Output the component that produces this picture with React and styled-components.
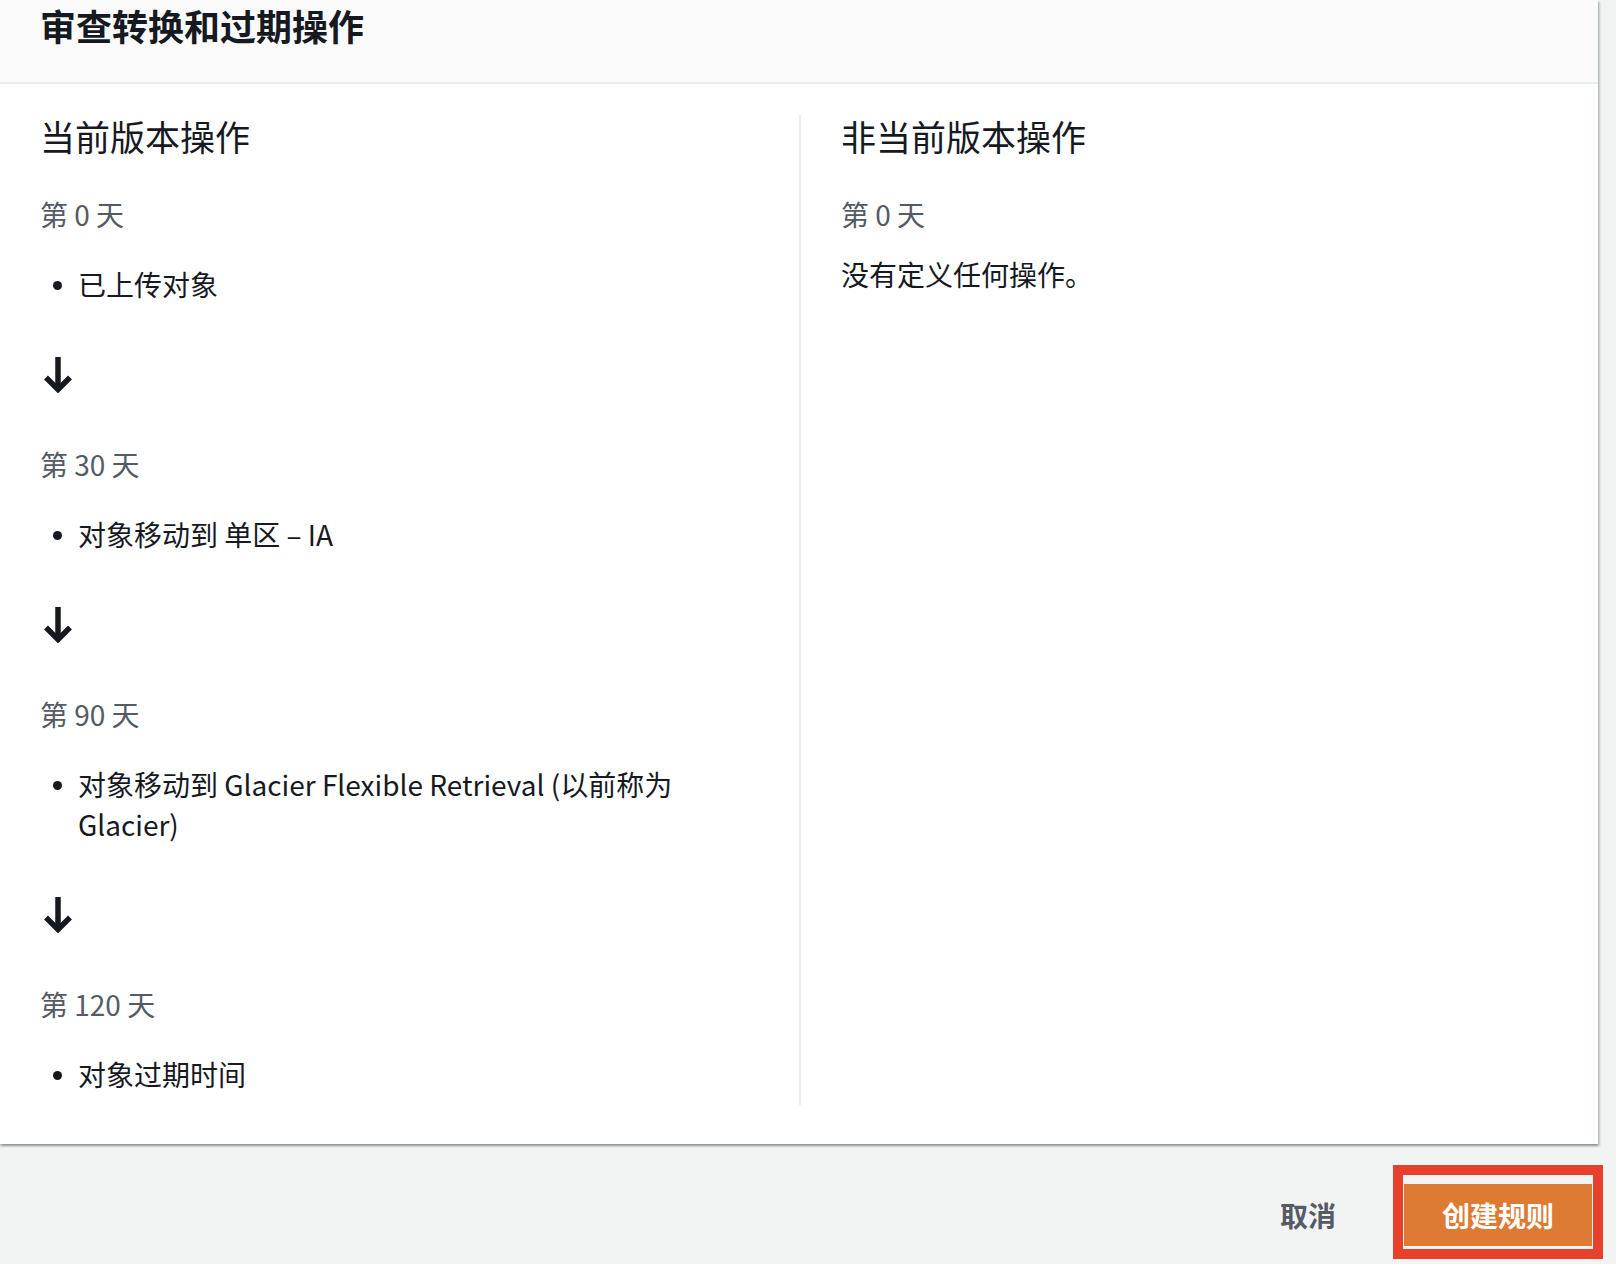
import React from 'react'
import styled, { createGlobalStyle } from 'styled-components'

const GlobalStyle = createGlobalStyle`
  html, body {
    margin: 0;
    padding: 0;
    background: #f2f3f3;
    font-family: "Noto Sans CJK SC", "Noto Sans", sans-serif;
    color: #16191f;
  }
`

const steps = [
  { day: '第 0 天', action: '已上传对象' },
  { day: '第 30 天', action: '对象移动到 单区 – IA' },
  { day: '第 90 天', action: '对象移动到 Glacier Flexible Retrieval (以前称为 Glacier)' },
  { day: '第 120 天', action: '对象过期时间' },
]

const DownArrow = () => (
  <svg width="30" height="38" viewBox="0 0 30 38" fill="none">
    <path d="M15 2v32" stroke="#16191f" strokeWidth="5.5" />
    <path d="M3 22.5l12 12 12-12" stroke="#16191f" strokeWidth="5.5" strokeLinejoin="miter" />
  </svg>
)

const App = () => {
  return (
    <Page>
      <GlobalStyle />
      <Card>
        <CardHeader>
          <Title>审查转换和过期操作</Title>
        </CardHeader>
        <CardBody>
          <Column>
            <SectionTitle>当前版本操作</SectionTitle>
            {steps.map((s, i) => (
              <Step key={s.day}>
                <DayLabel>{s.day}</DayLabel>
                <ActionList>
                  <ActionItem>
                    <Dot />
                    <span>{s.action}</span>
                  </ActionItem>
                </ActionList>
                {i < steps.length - 1 && (
                  <ArrowRow>
                    <DownArrow />
                  </ArrowRow>
                )}
              </Step>
            ))}
          </Column>
          <Column divided>
            <SectionTitle>非当前版本操作</SectionTitle>
            <DayLabel>第 0 天</DayLabel>
            <EmptyText>没有定义任何操作。</EmptyText>
          </Column>
        </CardBody>
      </Card>
      <Footer>
        <CancelButton>取消</CancelButton>
        <Highlight>
          <PrimaryButton>创建规则</PrimaryButton>
        </Highlight>
      </Footer>
    </Page>
  )
}

const Page = styled.div`
  min-height: 1264px;
  background: #f2f3f3;
  overflow: hidden;
`

const Card = styled.div`
  width: 1598px;
  background: #ffffff;
  box-shadow: 0 2px 2px 0 rgba(0, 28, 36, 0.3), 2px 2px 2px 0 rgba(0, 28, 36, 0.18);
`

const CardHeader = styled.div`
  background: #fafafa;
  padding: 4px 40px 36px;
  border-bottom: 2px solid #eaeded;
`

const Title = styled.h2`
  margin: 0;
  font-size: 36px;
  line-height: 42px;
  font-weight: 700;
  color: #16191f;
`

const CardBody = styled.div`
  display: grid;
  grid-template-columns: 1fr 1fr;
  padding: 31px 40px 39px;
`

const Column = styled.div`
  padding: ${p => (p.divided ? '0 0 0 40px' : '0 40px 11px 0')};
  border-left: ${p => (p.divided ? '2px solid #eaeded' : 'none')};
`

const SectionTitle = styled.h3`
  margin: 0 0 37px;
  font-size: 35px;
  line-height: 42px;
  font-weight: 400;
  color: #16191f;
`

const Step = styled.div`
  & + & {
    margin-top: 50px;
  }
`

const DayLabel = styled.div`
  font-size: 28px;
  line-height: 40px;
  color: #545b64;
`

const ActionList = styled.ul`
  list-style: none;
  margin: 30px 0 0;
  padding: 0;
`

const ActionItem = styled.li`
  display: flex;
  align-items: flex-start;
  font-size: 28px;
  line-height: 40px;
  color: #16191f;
`

const Dot = styled.span`
  flex: none;
  width: 9px;
  height: 9px;
  border-radius: 50%;
  background: #16191f;
  margin: 17px 16px 0 13px;
`

const ArrowRow = styled.div`
  display: flex;
  align-items: center;
  height: 40px;
  margin-top: 50px;
  padding-left: 3px;
`

const EmptyText = styled.p`
  margin: 20px 0 0;
  font-size: 28px;
  line-height: 40px;
  color: #16191f;
`

const Footer = styled.div`
  display: flex;
  justify-content: flex-end;
  align-items: center;
  padding: 40px 24px 0 0;
`

const CancelButton = styled.button`
  border: none;
  background: transparent;
  font-family: inherit;
  font-size: 28px;
  font-weight: 700;
  color: #545b64;
  height: 62px;
  padding: 0 36px;
  margin-right: 32px;
  cursor: pointer;
`

const Highlight = styled.span`
  position: relative;
  display: inline-flex;

  &::after {
    content: '';
    position: absolute;
    top: -19px;
    bottom: -13px;
    left: -11px;
    right: -11px;
    border: 10px solid #e8412b;
    pointer-events: none;
  }
`

const PrimaryButton = styled.button`
  border: none;
  background: #dd7a34;
  color: #ffffff;
  font-family: inherit;
  font-size: 28px;
  font-weight: 700;
  height: 62px;
  padding: 0 38px;
  cursor: pointer;
`

export default App
